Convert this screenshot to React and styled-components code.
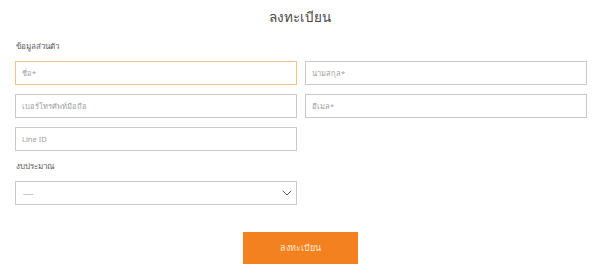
import React from "react";
import styled, { createGlobalStyle } from "styled-components";

const GlobalStyle = createGlobalStyle`
  html, body {
    margin: 0;
    padding: 0;
    background: #fff;
  }
  body {
    font-family: "Noto Sans", "Liberation Sans", sans-serif;
    color: #333;
  }
  * { box-sizing: border-box; }
`;

function ChevronDown() {
  return (
    <svg width="10" height="6" viewBox="0 0 10 6" fill="none">
      <path d="M0.8 0.8 L5 5 L9.2 0.8" stroke="#555" strokeWidth="1" />
    </svg>
  );
}

function App() {
  return (
    <>
      <GlobalStyle />
      <Page>
        <Title>ลงทะเบียน</Title>
        <SectionLabel>ข้อมูลส่วนตัว</SectionLabel>
        <Grid>
          <Field $focused placeholder="ชื่อ*" />
          <Field placeholder="นามสกุล*" />
          <Field placeholder="เบอร์โทรศัพท์มือถือ" />
          <Field placeholder="อีเมล*" />
          <Field placeholder="Line ID" />
        </Grid>
        <SectionLabel $gap>งบประมาณ</SectionLabel>
        <SelectBox>
          <span>----</span>
          <ChevronDown />
        </SelectBox>
        <Actions>
          <SubmitButton>ลงทะเบียน</SubmitButton>
        </Actions>
      </Page>
    </>
  );
}

const Page = styled.div`
  width: 600px;
  padding: 8px 13px 0 15px;
`;

const Title = styled.h1`
  margin: 0;
  text-align: center;
  font-size: 13.5px;
  font-weight: 300;
  line-height: 18px;
  color: #484848;
  padding-right: 2px;
`;

const SectionLabel = styled.div`
  font-size: 8px;
  line-height: 12px;
  color: #5a5a5a;
  margin: ${(p) => (p.$gap ? "9px 0 9px 1px" : "14px 0 9px 1px")};
`;

const Grid = styled.div`
  display: grid;
  grid-template-columns: 282px 282px;
  column-gap: 8px;
  row-gap: 9px;
`;

const Field = styled.input`
  width: 100%;
  height: 24px;
  border: 1px solid ${(p) => (p.$focused ? "#f2c48a" : "#c9c9c9")};
  background: #fff;
  padding: 0 6px;
  font-family: inherit;
  font-size: 7.5px;
  color: #333;
  outline: none;
  &::placeholder {
    color: #a0a0a0;
  }
`;

const SelectBox = styled.div`
  width: 282px;
  height: 24px;
  border: 1px solid #c9c9c9;
  display: flex;
  align-items: center;
  justify-content: space-between;
  padding: 0 4px 0 7px;
  font-size: 8px;
  color: #aaa;
`;

const Actions = styled.div`
  display: flex;
  justify-content: center;
  margin-top: 27px;
  padding-right: 1px;
`;

const SubmitButton = styled.button`
  width: 115px;
  height: 32px;
  border: none;
  background: #f48120;
  color: #fde7d2;
  font-family: inherit;
  font-size: 9px;
  cursor: pointer;
`;

export default App;
